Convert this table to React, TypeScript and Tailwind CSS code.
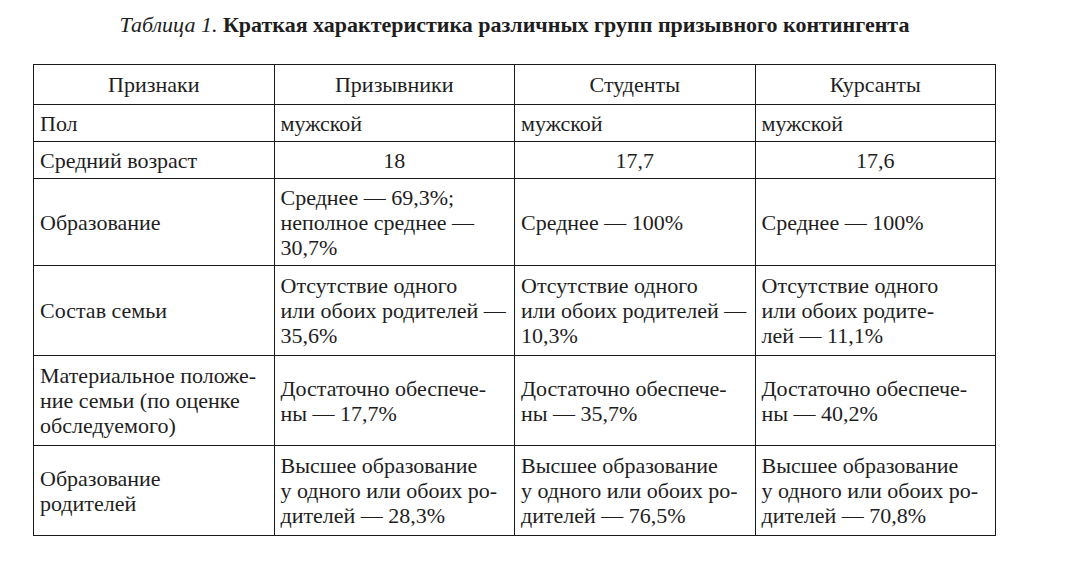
const rows: { label: React.ReactNode; cells: React.ReactNode[]; center?: boolean; tall?: boolean }[] = [
  { label: "Пол", cells: ["мужской", "мужской", "мужской"] },
  { label: "Средний возраст", cells: ["18", "17,7", "17,6"], center: true },
  {
    label: "Образование",
    cells: [
      <>
        Среднее — 69,3%;
        <br />
        неполное среднее —
        <br />
        30,7%
      </>,
      "Среднее — 100%",
      "Среднее — 100%",
    ],
  },
  {
    label: "Состав семьи",
    tall: true,
    cells: [
      <>
        Отсутствие одного
        <br />
        или обоих родителей —
        <br />
        35,6%
      </>,
      <>
        Отсутствие одного
        <br />
        или обоих родителей —
        <br />
        10,3%
      </>,
      <>
        Отсутствие одного
        <br />
        или обоих родите-
        <br />
        лей — 11,1%
      </>,
    ],
  },
  {
    label: (
      <>
        Материальное положе-
        <br />
        ние семьи (по оценке
        <br />
        обследуемого)
      </>
    ),
    tall: true,
    cells: [
      <>
        Достаточно обеспече-
        <br />
        ны — 17,7%
      </>,
      <>
        Достаточно обеспече-
        <br />
        ны — 35,7%
      </>,
      <>
        Достаточно обеспече-
        <br />
        ны — 40,2%
      </>,
    ],
  },
  {
    label: (
      <>
        Образование
        <br />
        родителей
      </>
    ),
    tall: true,
    cells: [
      <>
        Высшее образование
        <br />
        у одного или обоих ро-
        <br />
        дителей — 28,3%
      </>,
      <>
        Высшее образование
        <br />
        у одного или обоих ро-
        <br />
        дителей — 76,5%
      </>,
      <>
        Высшее образование
        <br />
        у одного или обоих ро-
        <br />
        дителей — 70,8%
      </>,
    ],
  },
];

const headers = ["Признаки", "Призывники", "Студенты", "Курсанты"];

export default function App() {
  return (
    <div className="h-[569px] w-[1080px] bg-white [font-family:'Liberation_Serif',serif] text-[22px] leading-[25px] text-[#1e1e1e]">
      <div className="ml-[33px] w-[963px] pt-[12px]">
        <p className="whitespace-nowrap text-center">
          <span className="italic">Таблица 1.</span>{" "}
          <span className="font-bold">Краткая характеристика различных групп призывного контингента</span>
        </p>
        <table className="mt-[27px] w-full table-fixed border-collapse border-[1.5px] border-[#1a1a1a]">
          <thead>
            <tr>
              {headers.map((h) => (
                <th
                  key={h}
                  className="h-[40px] whitespace-nowrap border-[1.5px] border-[#1a1a1a] px-[6px] text-center font-normal"
                >
                  {h}
                </th>
              ))}
            </tr>
          </thead>
          <tbody>
            {rows.map((row, i) => (
              <tr key={i}>
                <td
                  className={`whitespace-nowrap border-[1.5px] border-[#1a1a1a] px-[6px] align-middle ${
                    row.tall ? "py-[7px]" : "py-[5.5px]"
                  }`}
                >
                  {row.label}
                </td>
                {row.cells.map((c, j) => (
                  <td
                    key={j}
                    className={`whitespace-nowrap border-[1.5px] border-[#1a1a1a] px-[6px] align-middle ${
                      row.tall ? "py-[7px]" : "py-[5.5px]"
                    } ${row.center ? "text-center" : "text-left"}`}
                  >
                    {c}
                  </td>
                ))}
              </tr>
            ))}
          </tbody>
        </table>
      </div>
    </div>
  );
}
